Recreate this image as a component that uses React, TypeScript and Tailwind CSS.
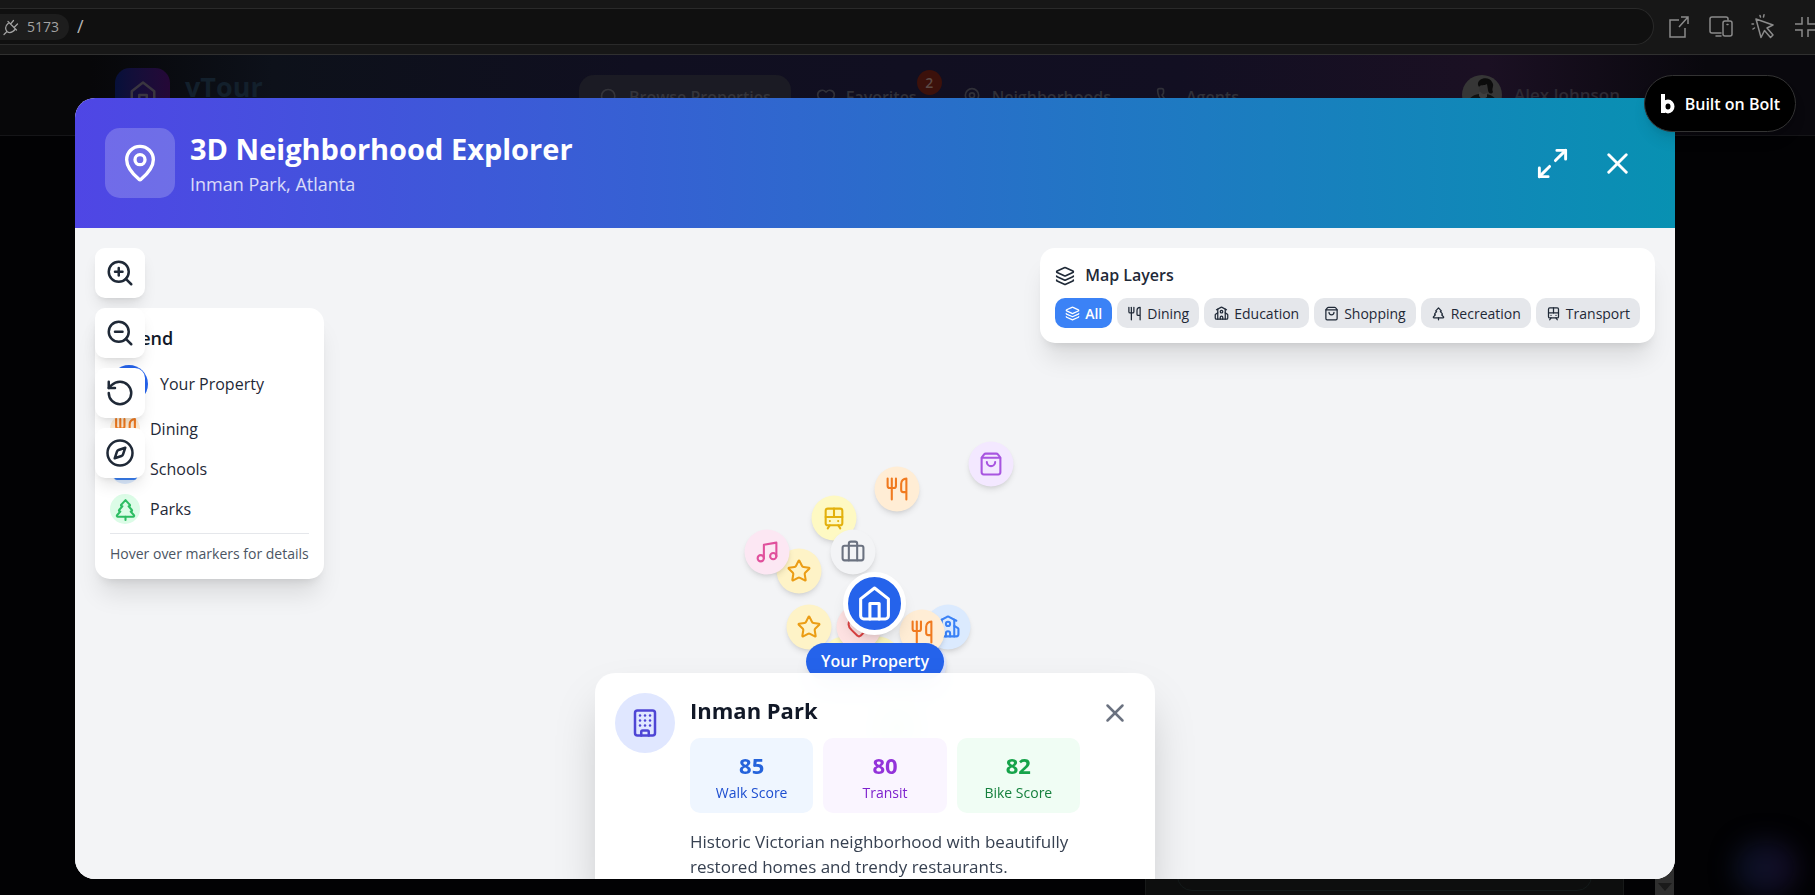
import { useState } from 'react';
import type { ComponentType, ReactNode } from 'react';
import {
  Briefcase,
  Building,
  Compass,
  Heart,
  Layers,
  MapPin,
  Maximize2,
  Music,
  Phone,
  RotateCcw,
  School,
  Search,
  ShoppingBag,
  Star,
  TramFront,
  TreePine,
  Utensils,
  X,
  ZoomIn,
  ZoomOut,
} from 'lucide-react';

type IconType = ComponentType<{ size?: number | string; className?: string }>;

function HomeIcon({ size = 24, className }: { size?: number | string; className?: string }) {
  return (
    <svg
      width={size}
      height={size}
      viewBox="0 0 24 24"
      fill="none"
      stroke="currentColor"
      strokeWidth="2"
      strokeLinecap="round"
      strokeLinejoin="round"
      className={className}
    >
      <path d="m3 9 9-7 9 7v11a2 2 0 0 1-2 2H5a2 2 0 0 1-2-2z" />
      <polyline points="9 22 9 12 15 12 15 22" />
    </svg>
  );
}

function PlugIcon() {
  return (
    <svg width="16" height="18" viewBox="0 0 16 18" fill="none" stroke="currentColor" strokeWidth="1.2" strokeLinecap="round" strokeLinejoin="round">
      <path d="M1 16.5 4 13.5M4 13.5C1.5 10.5 2.5 7.5 6 4.5L12.5 11C9.5 14.5 6.5 15.5 4 13.5ZM5 3.5 13.5 12M8 5.5 10.5 2.5M11.5 9 14.5 6" />
    </svg>
  );
}

function DevicesIcon() {
  return (
    <svg width="24" height="22" viewBox="0 0 24 22" fill="none" stroke="currentColor" strokeWidth="1.5" strokeLinecap="round">
      <path d="M12 17H3a2 2 0 0 1-2-2V3a2 2 0 0 1 2-2h14a2 2 0 0 1 2 2v1M7 20h5" />
      <rect x="14" y="5" width="9" height="15" rx="2" />
      <path d="M18 8.5h1" />
    </svg>
  );
}

function InspectIcon() {
  return (
    <svg width="24" height="26" viewBox="0 0 24 26" fill="none" stroke="currentColor" strokeWidth="1.5" strokeLinecap="round" strokeLinejoin="round">
      <path d="m5 5 17 6-6 3 6 7-2.500 2.500-6-7-3.500 7z" />
      <path d="M9 1.5 9.5 3M13 .8 12.5 3M1 10h1.500M2 15l1.500-1" />
    </svg>
  );
}

function ShrinkIcon() {
  return (
    <svg width="20" height="20" viewBox="0 0 20 20" fill="none" stroke="currentColor" strokeWidth="1.5">
      <path d="M7 0v7H0M13 0v7h7M7 20v-7H0M13 20v-7h7" />
    </svg>
  );
}

const layers: { label: string; icon: IconType }[] = [
  { label: 'All', icon: Layers },
  { label: 'Dining', icon: Utensils },
  { label: 'Education', icon: School },
  { label: 'Shopping', icon: ShoppingBag },
  { label: 'Recreation', icon: TreePine },
  { label: 'Transport', icon: TramFront },
];

const controls: { label: string; icon: IconType }[] = [
  { label: 'Zoom in', icon: ZoomIn },
  { label: 'Zoom out', icon: ZoomOut },
  { label: 'Reset view', icon: RotateCcw },
  { label: 'Orientation', icon: Compass },
];

const legend: { label: string; icon: IconType; color: string }[] = [
  { label: 'Dining', icon: Utensils, color: 'bg-[#ffedd5] text-[#f07a1f]' },
  { label: 'Schools', icon: School, color: 'bg-[#dbeafe] text-[#3b82f6]' },
  { label: 'Parks', icon: TreePine, color: 'bg-[#dcfce7] text-[#2dbd63]' },
];

// x / y are distances from the centre of the map
const markers: { x: number; y: number; icon: IconType; color: string }[] = [
  { x: 116, y: -90, icon: ShoppingBag, color: 'bg-[#f3e8ff] text-[#a855e0]' },
  { x: 22, y: -65, icon: Utensils, color: 'bg-[#ffedd5] text-[#f07a1f]' },
  { x: -41, y: -36, icon: TramFront, color: 'bg-[#fef9c3] text-[#e3b10d]' },
  { x: -76, y: 17, icon: Star, color: 'bg-[#fef3c7] text-[#eb9d15]' },
  { x: -108, y: -2, icon: Music, color: 'bg-[#fce7f3] text-[#e0509c]' },
  { x: -22, y: -2, icon: Briefcase, color: 'bg-[#f3f4f6] text-[#6b7280]' },
  { x: -31, y: 105, icon: TramFront, color: 'bg-[#fef9c3] text-[#e3b10d]' },
  { x: 3, y: 105, icon: TramFront, color: 'bg-[#fef9c3] text-[#e3b10d]' },
  { x: 49, y: 110, icon: Building, color: 'bg-[#e0e7ff] text-[#6366f1]' },
  { x: 22, y: 172, icon: TreePine, color: 'bg-[#dcfce7] text-[#22c55e]' },
  { x: -66, y: 73, icon: Star, color: 'bg-[#fef3c7] text-[#eb9d15]' },
  { x: -16, y: 73, icon: Heart, color: 'bg-[#fee2e2] text-[#e04444]' },
  { x: 73, y: 73, icon: School, color: 'bg-[#dbeafe] text-[#3b82f6]' },
  { x: 47, y: 78, icon: Utensils, color: 'bg-[#ffedd5] text-[#f07a1f]' },
];

const scores = [
  { value: 85, label: 'Walk Score', box: 'bg-[#eff6ff]', number: 'text-[#2563db]', text: 'text-[#1d4ed0]' },
  { value: 80, label: 'Transit', box: 'bg-[#faf5ff]', number: 'text-[#9333da]', text: 'text-[#7e22ce]' },
  { value: 82, label: 'Bike Score', box: 'bg-[#f0fdf4]', number: 'text-[#16a34a]', text: 'text-[#15803d]' },
];

function BrowserBar() {
  const iconButton = 'flex h-8 w-8 shrink-0 items-center justify-center cursor-pointer';

  return (
    <div className="flex h-[55px] shrink-0 items-center border-b border-[#303030] bg-[#171717] pb-px text-[#8b8b8b]">
      <div className="flex h-[37px] min-w-0 flex-1 items-center gap-2 rounded-r-full border border-l-0 border-[#2a2a2a] bg-[#101010]">
        <span className="flex h-[26px] items-center gap-2 rounded-r-full bg-[#1d1d1d] pl-[3px] pr-[10px] text-[14px] text-[#a3a3a3]">
          <PlugIcon />
          5173
        </span>
        <input
          aria-label="Path"
          defaultValue="/"
          className="min-w-0 flex-1 bg-transparent text-[18px] text-[#b5b5b5] outline-none"
        />
      </div>
      <div className="flex w-[161px] shrink-0 gap-[10px] overflow-hidden pl-[9px]">
        <button className={iconButton} aria-label="Open in new tab">
          <svg width="20" height="22" viewBox="0 0 20 22" fill="none" stroke="currentColor" strokeWidth="1.5">
            <path d="M10 4H1v17h15v-9M12 1h7v7M19 1l-9 10" />
          </svg>
        </button>
        <button className={iconButton} aria-label="Device preview"><DevicesIcon /></button>
        <button className={iconButton} aria-label="Inspect"><InspectIcon /></button>
        <button className={iconButton} aria-label="Exit fullscreen"><ShrinkIcon /></button>
      </div>
    </div>
  );
}

function NavItem({ icon: Icon, label, active }: { icon: IconType; label: string; active?: boolean }) {
  return (
    <a
      href="#"
      data-active={active}
      className="flex h-[45px] items-center gap-[10px] rounded-[15px] px-5 text-[16px] font-semibold text-[#303038] data-[active=true]:bg-[#1b1b24] data-[active=true]:text-[#34343a]"
    >
      <Icon size={20} />
      {label}
    </a>
  );
}

function SiteHeader() {
  return (
    <header className="flex h-[81px] items-center border-b border-[#151518] bg-[linear-gradient(to_right,#070709_5%,#0d111a_15%,#100f20_35%,#120f22_65%,#1b1023_82%,#09080d_94%)] pl-[115px] pr-[195px]">
      <div className="flex w-[464px] items-center gap-[15px]">
        <span className="flex h-[55px] w-[55px] items-center justify-center rounded-[15px] bg-linear-to-r from-[#06103a] to-[#250837] text-[#3a3640]">
          <HomeIcon size={30} />
        </span>
        <span className="pb-4 text-[27px] font-bold text-[#13202c]">vTour</span>
      </div>
      <nav className="flex gap-[5px] pt-1">
        <NavItem icon={Search} label="Browse Properties" active />
        <div className="relative">
          <NavItem icon={Heart} label="Favorites" />
          <span className="absolute -right-[5px] -top-[5px] flex h-[25px] w-[25px] items-center justify-center rounded-full bg-[#3c110b] text-[14px] font-semibold text-[#5c4a46]">
            2
          </span>
        </div>
        <NavItem icon={MapPin} label="Neighborhoods" />
        <NavItem icon={Phone} label="Agents" />
      </nav>
      <div className="ml-auto flex items-center gap-3 text-[17px] font-semibold text-[#2d2933]">
        <svg width="40" height="40" viewBox="0 0 40 40">
          <circle cx="20" cy="20" r="20" fill="#363636" />
          <path d="M4 32c1-8 6-12 13-13l3 3 4-3c7 1 12 5 13 13a20 20 0 0 1-33 0z" fill="#111" />
          <path d="M17 17h8v5l-5 3-3-4z" fill="#3e3e3e" />
          <ellipse cx="22" cy="12" rx="5" ry="7" fill="#333" />
          <path d="M16 10c-1-8 12-9 14-3 3 4-1 6 1 10-2 3-5 1-5-2l-1-6c-3 2-6 0-8 3z" fill="#0c0c0c" />
        </svg>
        Alex Johnson
      </div>
    </header>
  );
}

function Panel({ className, children }: { className: string; children: ReactNode }) {
  return <div className={`rounded-[15px] bg-white p-[15px] shadow-xl ${className}`}>{children}</div>;
}

function NeighborhoodCard() {
  return (
    <section className="absolute left-1/2 top-[445px] z-30 flex w-[560px] -translate-x-1/2 items-start gap-[15px] rounded-[20px] bg-white/95 p-5 shadow-2xl backdrop-blur-md">
      <span className="flex h-[60px] w-[60px] shrink-0 items-center justify-center rounded-full bg-[#e0e7ff] text-[#4f46d5]">
        <Building size={30} />
      </span>
      <div className="min-w-0 flex-1">
        <h3 className="text-[22px] leading-[35px] font-bold text-[#111827]">Inman Park</h3>
        <div className="mt-[10px] grid grid-cols-3 gap-[10px]">
          {scores.map((score) => (
            <div key={score.label} className={`rounded-[10px] p-[10px] text-center ${score.box}`}>
              <div className={`text-[22px] leading-[35px] font-bold ${score.number}`}>{score.value}</div>
              <div className={`text-[14px] leading-5 ${score.text}`}>{score.label}</div>
            </div>
          ))}
        </div>
        <p className="mt-4 text-[17px] leading-[25px] text-[#374151]">
          Historic Victorian neighborhood with beautifully restored homes and trendy restaurants.
        </p>
      </div>
      <button className="cursor-pointer rounded-[10px] p-[5px] text-[#6b7280] hover:bg-gray-100" aria-label="Close details">
        <X size={30} />
      </button>
    </section>
  );
}

function NeighborhoodMap() {
  const [activeLayer, setActiveLayer] = useState('All');

  return (
    <div className="relative min-h-0 flex-1 overflow-hidden bg-[#f3f4f6]">
      {markers.map((marker) => (
        <button
          key={`${marker.x},${marker.y}`}
          aria-label="Place"
          className={`absolute flex h-[45px] w-[45px] -translate-1/2 cursor-pointer items-center justify-center rounded-full shadow-md ${marker.color}`}
          style={{ left: `calc(50% + ${marker.x}px)`, top: `calc(50% + ${marker.y}px)` }}
        >
          <marker.icon size={25} />
        </button>
      ))}

      <div className="absolute left-1/2 top-[344px] z-10 flex -translate-x-1/2 flex-col items-center gap-2">
        <span className="flex h-[63px] w-[63px] items-center justify-center rounded-full border-5 border-white bg-[#2563eb] text-white shadow-lg">
          <HomeIcon size={37} />
        </span>
        <span className="rounded-full bg-[#2563eb] px-[15px] py-[5px] text-[16px] leading-[27px] font-semibold whitespace-nowrap text-white shadow-lg">
          Your Property
        </span>
      </div>

      <Panel className="absolute left-5 top-20 z-10">
        <h3 className="mb-[10px] text-[18px] leading-[31px] font-semibold text-[#111827]">Legend</h3>
        <ul className="flex flex-col gap-[10px] text-[16px] text-[#1f2937]">
          <li className="flex h-10 items-center gap-3">
            <span className="flex h-[38px] w-[38px] items-center justify-center rounded-full bg-[#2563eb] text-white">
              <HomeIcon size={20} />
            </span>
            Your Property
          </li>
          {legend.map((item) => (
            <li key={item.label} className="flex items-center gap-[10px]">
              <span className={`flex h-[30px] w-[30px] items-center justify-center rounded-full ${item.color}`}>
                <item.icon size={25} />
              </span>
              {item.label}
            </li>
          ))}
        </ul>
        <p className="mt-[9px] border-t border-gray-200 pt-[10px] text-[14px] leading-5 text-[#4b5563]">
          Hover over markers for details
        </p>
      </Panel>

      <div className="absolute left-5 top-5 z-20 flex flex-col gap-[10px]">
        {controls.map((control) => (
          <button
            key={control.label}
            aria-label={control.label}
            className="flex h-[50px] w-[50px] cursor-pointer items-center justify-center rounded-[10px] bg-white text-[#1f2937] shadow-lg hover:bg-gray-50"
          >
            <control.icon size={30} />
          </button>
        ))}
      </div>

      <Panel className="absolute right-5 top-5 z-10">
        <div className="mb-[10px] flex items-center gap-[10px] text-[#1f2937]">
          <Layers size={20} />
          <h3 className="text-[16px] leading-[25px] font-semibold">Map Layers</h3>
        </div>
        <div className="flex gap-[5px]">
          {layers.map((layer) => (
            <button
              key={layer.label}
              data-active={activeLayer === layer.label}
              onClick={() => setActiveLayer(layer.label)}
              className="flex h-[30px] cursor-pointer items-center gap-[5px] rounded-[10px] bg-[#e5e7eb] px-[10px] text-[14px] text-[#1f2937] data-[active=true]:bg-[#3b82f6] data-[active=true]:font-semibold data-[active=true]:text-white"
            >
              <layer.icon size={15} />
              {layer.label}
            </button>
          ))}
        </div>
      </Panel>

      <NeighborhoodCard />
    </div>
  );
}

function ExplorerModal() {
  return (
    <div role="dialog" aria-label="3D Neighborhood Explorer" className="flex min-h-0 flex-1 flex-col overflow-hidden rounded-[20px] bg-white">
      <div className="flex items-center justify-between bg-linear-to-r/srgb from-[#4f46e5] to-[#0891b2] p-[30px] text-white">
        <div className="flex items-center gap-[15px]">
          <span className="flex h-[70px] w-[70px] items-center justify-center rounded-[15px] bg-white/20">
            <MapPin size={40} />
          </span>
          <div>
            <h2 className="text-[29px] leading-[42px] font-bold">3D Neighborhood Explorer</h2>
            <p className="text-[18px] leading-7 text-white/80">Inman Park, Atlanta</p>
          </div>
        </div>
        <div className="flex gap-[10px]">
          <button className="cursor-pointer rounded-full p-[10px] hover:bg-white/20" aria-label="Fullscreen">
            <Maximize2 size={35} />
          </button>
          <button className="cursor-pointer rounded-full p-[10px] hover:bg-white/20" aria-label="Close">
            <X size={35} />
          </button>
        </div>
      </div>
      <NeighborhoodMap />
    </div>
  );
}

export default function App() {
  return (
    <div className="flex h-screen flex-col overflow-hidden bg-[#020204] font-['Open_Sans','Noto_Sans',sans-serif]">
      <BrowserBar />
      <div className="relative flex min-h-0 flex-1 flex-col justify-between">
        <SiteHeader />

        <div className="flex items-end justify-end pr-[141px]">
          <div className="mr-[31px] w-[479px] border-x border-[#171919] bg-[#0d0e0e] px-[31px] pb-1">
            <button className="h-[45px] w-full rounded-b-[15px] border border-[#131a1a] pb-2 text-[18px] leading-5 font-semibold text-[#182020]">
              Request Info
            </button>
          </div>
          <span className="flex h-[30px] w-[19px] items-end justify-center bg-[#2f2f2f] pb-1">
            <svg width="14" height="8" viewBox="0 0 14 8"><path d="M0 0h14L7 8z" fill="#1a1a1a" /></svg>
          </span>
        </div>
        <span className="absolute bottom-0 right-[18px] h-[54px] w-[62px] rounded-full bg-linear-to-r from-[#0a1226] to-[#130c26] blur-md" />

        <div className="absolute inset-0 z-10 flex flex-col pb-4 pl-[75px] pr-[140px] pt-[43px]">
          <ExplorerModal />
        </div>

        <a
          href="#"
          className="absolute right-[19px] top-5 z-20 flex h-[57px] items-center gap-[10px] rounded-full border border-[#333] bg-black px-[15px] text-[16px] font-semibold text-white shadow-lg"
        >
          <svg width="15" height="20" viewBox="0 0 15 20" fill="none" stroke="currentColor" strokeWidth="4">
            <path d="M3 0v19" />
            <ellipse cx="8" cy="12.5" rx="4.500" ry="5" />
          </svg>
          Built on Bolt
        </a>
      </div>
    </div>
  );
}
